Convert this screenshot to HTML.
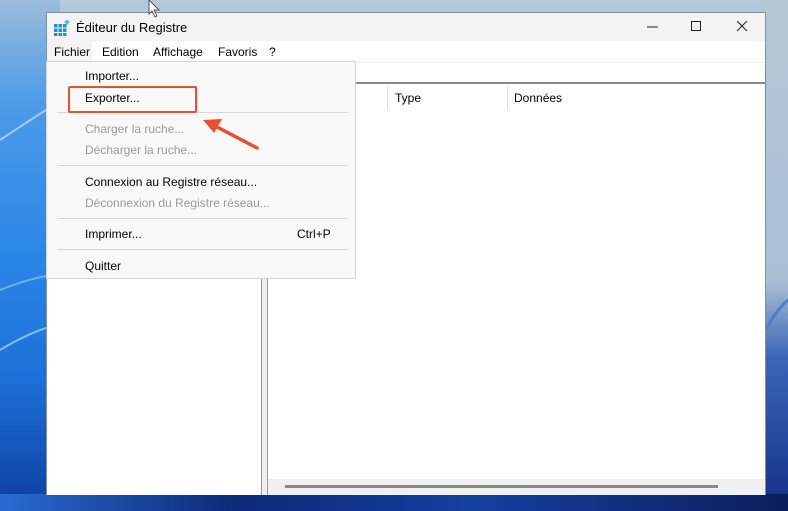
<!DOCTYPE html>
<html><head><meta charset="utf-8"><style>
*{margin:0;padding:0;box-sizing:border-box}
body{width:788px;height:511px;overflow:hidden;position:relative;font-family:"Liberation Sans",sans-serif;font-size:12px;color:#000;
background:linear-gradient(180deg,#b5c9dc 0%,#8fb3d6 25%,#3f8ae0 55%,#1458c8 80%,#0a2a7a 100%);}
.bgl{position:absolute;left:0;top:0;width:60px;height:511px;background:linear-gradient(180deg,#9bbcdc 0%,#4d9be8 20%,#2a86e6 50%,#1c6fd8 75%,#0e3e9e 100%)}
.bgr{position:absolute;left:760px;top:0;width:28px;height:511px;background:linear-gradient(180deg,#b7c7d6 0%,#a9bfd4 55%,#3a66b8 70%,#122f86 100%)}
.bgb{position:absolute;left:0;top:494px;width:788px;height:17px;background:linear-gradient(90deg,#2a6bd0,#0b2a78 30%,#1440a0 60%,#0a1f5c)}
.win{position:absolute;left:46px;top:12px;width:720px;height:483px;background:#fff;border:1px solid #8a8f96}
.title{position:absolute;left:0;top:0;width:718px;height:28px;background:#f3f3f3}
.title .t{position:absolute;left:29px;top:7px;font-size:13px}
.ctl{position:absolute;top:5px;font-size:14px;color:#222}
.menu{position:absolute;left:0;top:28px;width:718px;height:21px;background:#fff}
.menu span{position:absolute;top:4px}
.addr{position:absolute;left:0;top:49px;width:718px;height:22px;background:#fff;border-bottom:2px solid #8a8a8a;border-top:1px solid #eee}
.left{position:absolute;left:0;top:73px;width:214px;height:409px;background:#fff}
.split{position:absolute;left:214px;top:73px;width:7px;height:409px;background:#f0f0f0;border-left:1px solid #999;border-right:1px solid #999}
.hdr{position:absolute;top:78px;font-size:12px}
.vs{position:absolute;top:74px;width:1px;height:22px;background:#ddd}
.hs{position:absolute;left:221px;top:466px;width:497px;height:16px;background:#f0f0f0}
.hs div{position:absolute;left:17px;top:6px;width:433px;height:3px;background:#888}
.dd{position:absolute;left:46px;top:61px;width:310px;height:218px;background:#f9f9f9;border:1px solid #d6d6d6}
.it{position:absolute;left:38px;font-size:12px}
.dis{color:#9a9a9a}
.sep{position:absolute;left:10px;width:291px;height:1px;background:#d8d8d8}
</style></head><body>
<div class="bgl"></div><div class="bgr"></div><div class="bgb"></div>
<svg style="position:absolute;left:0;top:0" width="788" height="511">
<path d="M0 140 Q30 120 46 110" stroke="#9ccff2" stroke-width="2" fill="none"/>
<path d="M0 350 Q25 335 46 328" stroke="#7fc0f0" stroke-width="2" fill="none"/>
<path d="M0 290 Q25 280 46 276" stroke="#6ab3ee" stroke-width="2" fill="none"/>
<path d="M766 330 Q776 310 788 300" stroke="#4c7fc6" stroke-width="3" fill="none"/>
</svg>
<div class="win">
 <div class="title">
  <svg style="position:absolute;left:7px;top:7px" width="16" height="16"><g fill="#1f8fd8"><rect x="0" y="4" width="3.5" height="3.5"/><rect x="4.5" y="4" width="3.5" height="3.5"/><rect x="9" y="4" width="3.5" height="3.5"/><rect x="0" y="8.5" width="3.5" height="3.5"/><rect x="4.5" y="8.5" width="3.5" height="3.5"/><rect x="9" y="8.5" width="3.5" height="3.5"/><rect x="0" y="13" width="3.5" height="3"/><rect x="4.5" y="13" width="3.5" height="3"/><rect x="9" y="13" width="3.5" height="3"/></g><rect x="11" y="0" width="4" height="4" fill="#5bb8ee" transform="rotate(45 13 2)"/></svg>
  <span class="t">Éditeur du Registre</span>
  <svg style="position:absolute;left:599px;top:8px" width="14" height="12"><line x1="1" y1="6" x2="12" y2="6" stroke="#222" stroke-width="1"/></svg>
  <svg style="position:absolute;left:643px;top:7px" width="12" height="12"><rect x="1.5" y="1.5" width="9" height="9" fill="none" stroke="#222"/></svg>
  <svg style="position:absolute;left:689px;top:7px" width="12" height="12"><path d="M1 1L11 11M11 1L1 11" stroke="#222"/></svg>
 </div>
 <div class="menu"><span style="left:0;width:45px;height:21px;top:0;background:#f3f3f3"></span><span style="left:7px">Fichier</span><span style="left:55px">Edition</span><span style="left:106px">Affichage</span><span style="left:171px">Favoris</span><span style="left:222px">?</span></div>
 <div class="addr"></div>
 <div class="left"></div>
 <div class="split"></div>
 <div class="vs" style="left:340px"></div><div class="vs" style="left:460px"></div>
 <span class="hdr" style="left:348px">Type</span>
 <span class="hdr" style="left:467px">Données</span>
 <div class="hs"><div></div></div>
</div>
<div class="dd">
 <span class="it" style="top:7px">Importer...</span>
 <span class="it" style="top:29px">Exporter...</span>
 <div class="sep" style="top:50px"></div>
 <span class="it dis" style="top:60px">Charger la ruche...</span>
 <span class="it dis" style="top:81px">Décharger la ruche...</span>
 <div class="sep" style="top:103px"></div>
 <span class="it" style="top:113px">Connexion au Registre réseau...</span>
 <span class="it dis" style="top:134px">Déconnexion du Registre réseau...</span>
 <div class="sep" style="top:156px"></div>
 <span class="it" style="top:165px">Imprimer...</span>
 <span class="it" style="top:165px;left:250px">Ctrl+P</span>
 <div class="sep" style="top:187px"></div>
 <span class="it" style="top:197px">Quitter</span>
</div>
<div style="position:absolute;left:68px;top:86px;width:129px;height:27px;border:2px solid #e8502e;border-radius:2px"></div>
<svg style="position:absolute;left:0;top:0" width="788" height="511">
<line x1="257" y1="148" x2="215" y2="126" stroke="#e8502e" stroke-width="3.5" stroke-linecap="round"/>
<path d="M203 120 L222 119 L214 133 Z" fill="#e8502e"/>
<path d="M149 0 L149 14 L152 11 L155 17 L157 16 L154 10 L159 10 Z" fill="#fff" stroke="#333" stroke-width="0.8"/>
</svg>
</body></html>
